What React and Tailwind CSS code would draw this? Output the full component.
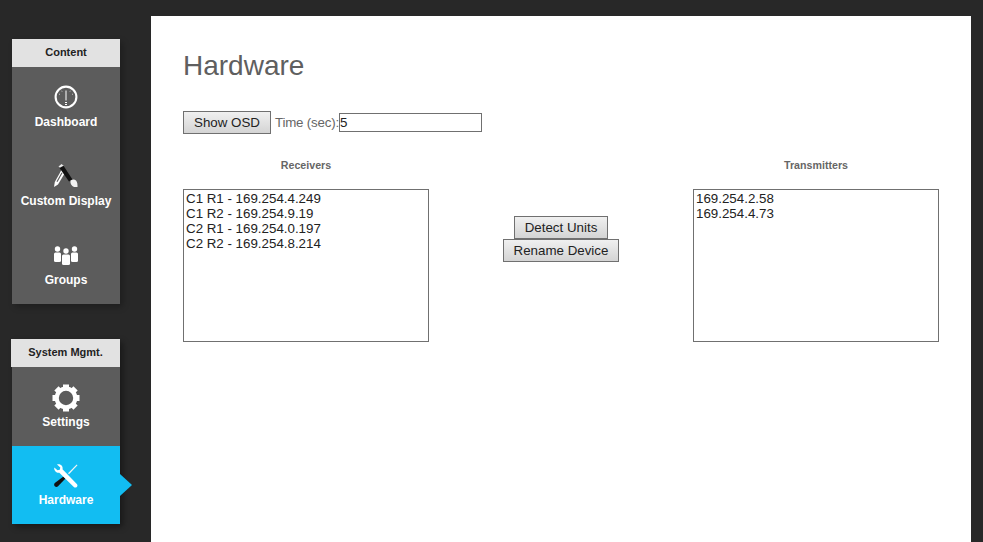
function DashIcon() {
  return (
    <svg width="24" height="24" viewBox="0 0 24 24" fill="none" stroke="white">
      <circle cx="12" cy="12" r="10.4" strokeWidth="2.1" />
      <path d="M12 5.500v10" strokeWidth="1" />
      <path d="M11 17.500h2M11 19.500h2" strokeWidth="1" />
      <path d="M5 9l.8.4M7.500 5.800l.5.7M16.500 5.800l-.5.7M19 9l-.8.4" strokeWidth="0.8" />
    </svg>
  );
}

function CustomIcon() {
  return (
    <svg width="24" height="24" viewBox="0 0 24 24">
      <path d="M8 5 .8 18 0 23l4-2.500L11.500 8z" fill="white" />
      <path d="M7.500 8.500 2.500 17.500l1 .6L8.500 9z" fill="#5c5c5c" />
      <path d="M4.500 2.500 7.500 0l2.500 2-3 2.500z" fill="#e8e8e8" />
      <path d="M5.500 4 9.500 1.800 18.500 15.500 15 17.500z" fill="#111" />
      <path d="M16.500 16.500c2-1.500 4-1.500 5.500 0 1.500 2 1.500 4 1.500 6.500h-3.500c-2.500-1-4-3.500-3.500-6.500z" fill="#f2f2f2" />
    </svg>
  );
}

function GroupsIcon() {
  return (
    <svg width="24" height="19" viewBox="0 0 24 19" fill="white">
      <circle cx="3.500" cy="3" r="2.700" />
      <circle cx="20.500" cy="3" r="2.700" />
      <circle cx="12" cy="5" r="2.700" />
      <rect x="0" y="6.500" width="7" height="9.500" rx="1.500" />
      <rect x="17" y="6.500" width="7" height="9.500" rx="1.500" />
      <rect x="8" y="8.500" width="8" height="10.500" rx="1.500" />
    </svg>
  );
}

function GearIcon() {
  return (
    <svg className="mt-[2px]" width="28" height="28" viewBox="0 0 28 28" fill="white">
      <circle cx="14" cy="14" r="9.300" fill="none" stroke="white" strokeWidth="4.200" />
      {[0, 45, 90, 135, 180, 225, 270, 315].map((a) => (
        <rect key={a} x="11" y="0.500" width="6" height="4.500" transform={`rotate(${a} 14 14)`} />
      ))}
    </svg>
  );
}

function ToolsIcon() {
  return (
    <svg width="24" height="24" viewBox="0 0 24 24">
      <path d="M22.700.5l.8.8-8.500 9-1-1z" fill="#f4f4f4" />
      <path d="M9.500 12.500 11.500 14.500 4 22.300c-.9.9-2.300.9-3.200 0s-.9-2.300 0-3.200z" fill="#111" />
      <path d="M3 .5C5 0 7 .5 8 2c.7 1.200.8 2.300.5 3.300L22.800 20c.9 1 .9 2.200 0 3s-2.200.8-3 0L5.300 8.700C4 9 2.500 8.600 1.500 7.500.5 6.400 0 5 .3 3.500L3.500 6.300 5.800 5.800l.5-2.300z" fill="white" />
    </svg>
  );
}

function NavItem({ icon, label, active }) {
  return (
    <div className={`relative flex flex-col items-center pt-[16px] text-white text-[12px] font-bold ${active ? "h-[78px] bg-[#12bdf2]" : "h-[79px]"}`}>
      <div className="h-[28px] flex items-center justify-center">{icon}</div>
      <div className={`leading-[14px] ${active ? "mt-[3px]" : "mt-[4px]"}`}>{label}</div>
      {active && (
        <div className="absolute right-[-12px] top-[28px] w-0 h-0 border-y-[11px] border-y-transparent border-l-[12px] border-l-[#12bdf2]" />
      )}
    </div>
  );
}

function ListBox({ items }) {
  return (
    <div className="w-[246px] h-[153px] border border-[#707070] px-[2px] pt-[1px] text-[13.33px] leading-[15px] text-[#222]">
      {items.map((t) => (
        <div key={t}>{t}</div>
      ))}
    </div>
  );
}

function Btn({ children, className = "" }) {
  return (
    <button className={`h-[23px] border border-[#707070] bg-gradient-to-b from-[#f0f0f0] to-[#d4d4d4] text-[13.33px] leading-none text-[#222] ${className}`}>
      {children}
    </button>
  );
}

export default function App() {
  return (
    <div className="h-[542px] w-[983px] overflow-hidden bg-[#282828] flex font-['Liberation_Sans',Arial,sans-serif]">
      <aside className="w-[151px] shrink-0 pl-[12px] pt-[39px]">
        <div className="w-[108px] bg-[#5c5c5c] shadow-[3px_3px_6px_rgba(0,0,0,0.25)]">
          <div className="h-[28px] pb-[2px] bg-[#e2e2e2] text-[#222] text-[11px] font-bold flex items-center justify-center">Content</div>
          <NavItem icon={<DashIcon />} label="Dashboard" />
          <NavItem icon={<CustomIcon />} label="Custom Display" />
          <NavItem icon={<GroupsIcon />} label="Groups" />
        </div>
        <div className="w-[108px] mt-[35px] bg-[#5c5c5c] shadow-[3px_3px_6px_rgba(0,0,0,0.4)]">
          <div className="h-[28px] pb-[2px] ml-[-1px] bg-[#e2e2e2] text-[#222] text-[11px] font-bold flex items-center justify-center">System Mgmt.</div>
          <NavItem icon={<GearIcon />} label="Settings" />
          <NavItem icon={<ToolsIcon />} label="Hardware" active />
        </div>
      </aside>

      <main className="mt-[16px] w-[820px] h-[526px] bg-white px-[32px] text-[#666]">
        <h1 className="mt-[33px] text-[28px] leading-[34px] text-[#5f5f5f]">Hardware</h1>
        <div className="mt-[28px] flex items-center text-[13.33px]">
          <Btn className="w-[88px]">Show OSD</Btn>
          <span className="ml-[4px] w-[64px] whitespace-nowrap tracking-[-0.2px]">Time (sec):</span>
          <div className="w-[143px] h-[19px] border border-[#707070] text-[#222] leading-[17px]">5</div>
        </div>
        <div className="mt-[25px] flex justify-between w-[756px]">
          <div>
            <div className="text-center text-[10.67px] font-bold leading-[12px] mb-[18px]">Receivers</div>
            <ListBox items={["C1 R1 - 169.254.4.249", "C1 R2 - 169.254.9.19", "C2 R1 - 169.254.0.197", "C2 R2 - 169.254.8.214"]} />
          </div>
          <div className="flex flex-col items-center pt-[57px]">
            <Btn className="w-[94px]">Detect Units</Btn>
            <Btn className="w-[116px]">Rename Device</Btn>
          </div>
          <div>
            <div className="text-center text-[10.67px] font-bold leading-[12px] mb-[18px]">Transmitters</div>
            <ListBox items={["169.254.2.58", "169.254.4.73"]} />
          </div>
        </div>
      </main>
    </div>
  );
}
